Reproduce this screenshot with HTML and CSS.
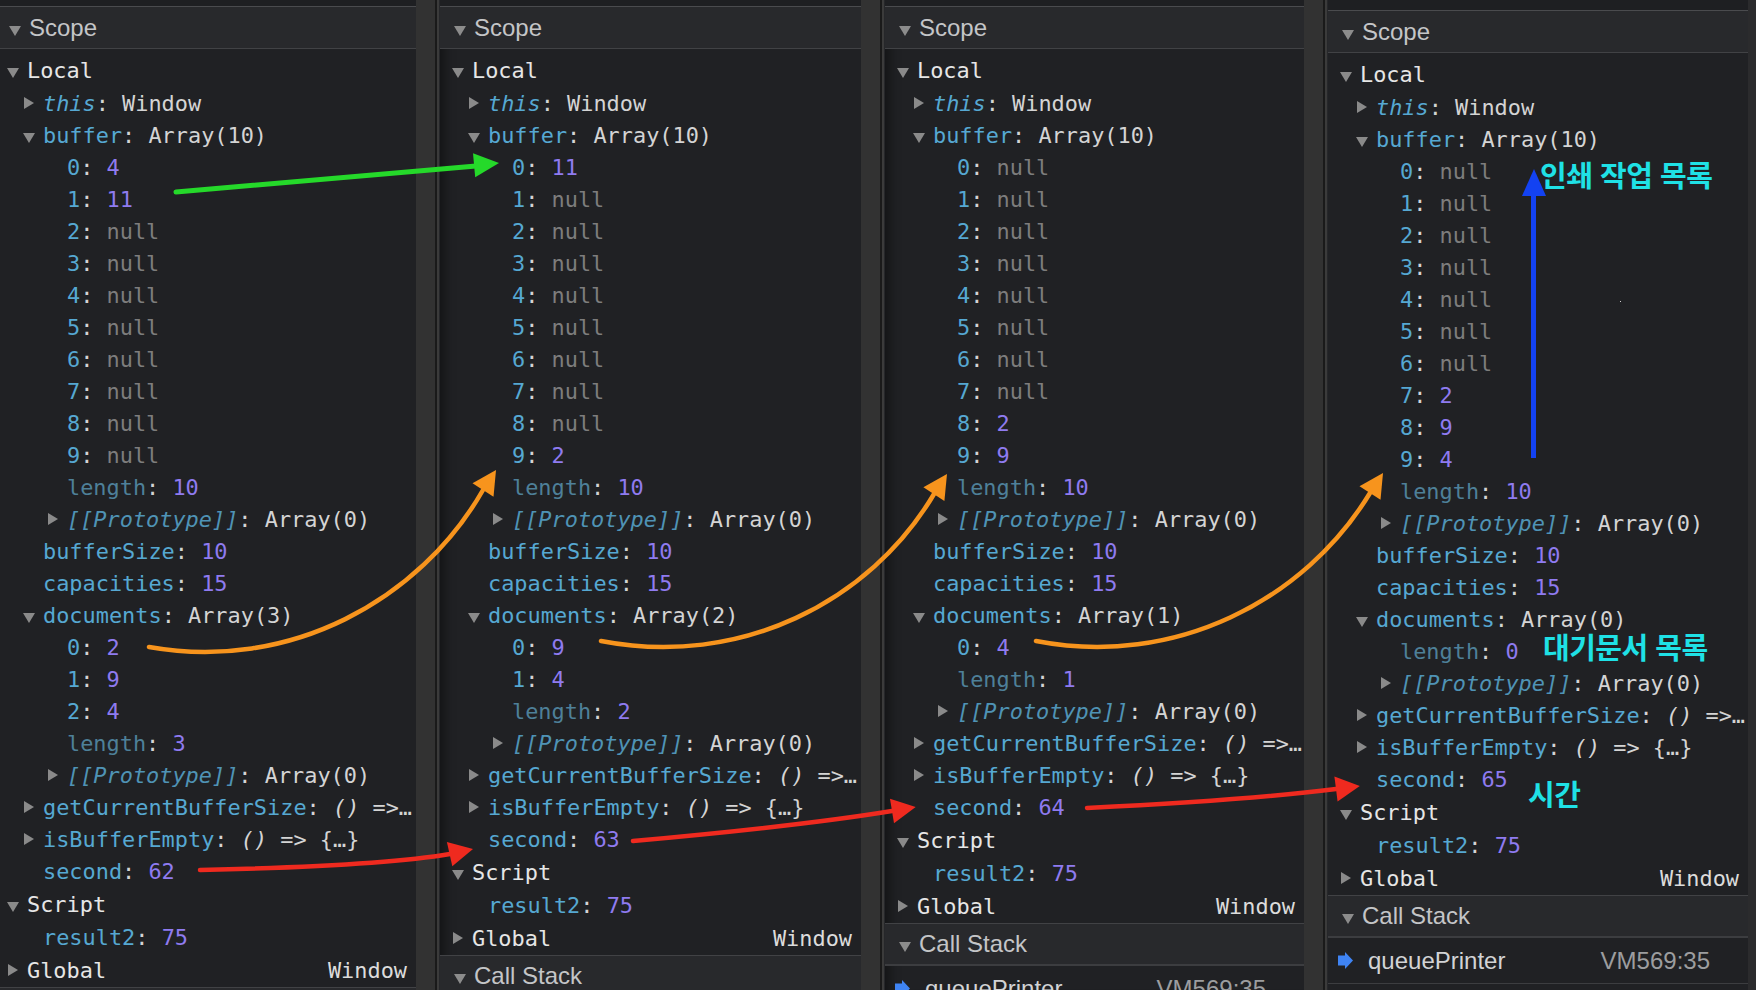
FILE: index.html
```html
<!DOCTYPE html>
<html lang="ko">
<head>
<meta charset="utf-8">
<title>Scope panels</title>
<link rel="stylesheet" href="styles.css">
</head>
<body>
<div class="screen">

  <section class="panel p1">
    <div class="inner">
      <div class="top"></div>
      <div class="hdr"><span class="htw"></span>Scope</div>
      <div class="tree">
        <div class="row sec"><span class="tw d"></span>Local</div>
        <div class="row l1"><span class="tw r"></span><span class="t"><span class="k it">this</span>: Window</span></div>
        <div class="row l1"><span class="tw d"></span><span class="t"><span class="k">buffer</span>: Array(10)</span></div>
        <div class="row l2"><span class="tw"></span><span class="t"><span class="k">0</span>: <span class="n">4</span></span></div>
        <div class="row l2"><span class="tw"></span><span class="t"><span class="k">1</span>: <span class="n">11</span></span></div>
        <div class="row l2"><span class="tw"></span><span class="t"><span class="k">2</span>: <span class="nl">null</span></span></div>
        <div class="row l2"><span class="tw"></span><span class="t"><span class="k">3</span>: <span class="nl">null</span></span></div>
        <div class="row l2"><span class="tw"></span><span class="t"><span class="k">4</span>: <span class="nl">null</span></span></div>
        <div class="row l2"><span class="tw"></span><span class="t"><span class="k">5</span>: <span class="nl">null</span></span></div>
        <div class="row l2"><span class="tw"></span><span class="t"><span class="k">6</span>: <span class="nl">null</span></span></div>
        <div class="row l2"><span class="tw"></span><span class="t"><span class="k">7</span>: <span class="nl">null</span></span></div>
        <div class="row l2"><span class="tw"></span><span class="t"><span class="k">8</span>: <span class="nl">null</span></span></div>
        <div class="row l2"><span class="tw"></span><span class="t"><span class="k">9</span>: <span class="nl">null</span></span></div>
        <div class="row l2"><span class="tw"></span><span class="t"><span class="kd">length</span>: <span class="n">10</span></span></div>
        <div class="row l2"><span class="tw r"></span><span class="t"><span class="kp">[[Prototype]]</span>: Array(0)</span></div>
        <div class="row l1"><span class="tw"></span><span class="t"><span class="k">bufferSize</span>: <span class="n">10</span></span></div>
        <div class="row l1"><span class="tw"></span><span class="t"><span class="k">capacities</span>: <span class="n">15</span></span></div>
        <div class="row l1"><span class="tw d"></span><span class="t"><span class="k">documents</span>: Array(3)</span></div>
        <div class="row l2"><span class="tw"></span><span class="t"><span class="k">0</span>: <span class="n">2</span></span></div>
        <div class="row l2"><span class="tw"></span><span class="t"><span class="k">1</span>: <span class="n">9</span></span></div>
        <div class="row l2"><span class="tw"></span><span class="t"><span class="k">2</span>: <span class="n">4</span></span></div>
        <div class="row l2"><span class="tw"></span><span class="t"><span class="kd">length</span>: <span class="n">3</span></span></div>
        <div class="row l2"><span class="tw r"></span><span class="t"><span class="kp">[[Prototype]]</span>: Array(0)</span></div>
        <div class="row l1"><span class="tw r"></span><span class="t cut"><span class="k">getCurrentBufferSize</span>: <span class="it">()</span> =&gt; {…}</span></div>
        <div class="row l1"><span class="tw r"></span><span class="t"><span class="k">isBufferEmpty</span>: <span class="it">()</span> =&gt; {…}</span></div>
        <div class="row l1"><span class="tw"></span><span class="t"><span class="k">second</span>: <span class="n">62</span></span></div>
        <div class="row sec"><span class="tw d"></span>Script</div>
        <div class="row l1"><span class="tw"></span><span class="t"><span class="k">result2</span>: <span class="n">75</span></span></div>
        <div class="row sec"><span class="tw r"></span>Global<span class="rv">Window</span></div>
      </div>
      <div class="hdr cs"><span class="htw"></span>Call Stack</div>
    </div>
  </section>

  <div class="gutter"></div>

  <section class="panel p2">
    <div class="inner">
      <div class="top"></div>
      <div class="hdr"><span class="htw"></span>Scope</div>
      <div class="tree">
        <div class="row sec"><span class="tw d"></span>Local</div>
        <div class="row l1"><span class="tw r"></span><span class="t"><span class="k it">this</span>: Window</span></div>
        <div class="row l1"><span class="tw d"></span><span class="t"><span class="k">buffer</span>: Array(10)</span></div>
        <div class="row l2"><span class="tw"></span><span class="t"><span class="k">0</span>: <span class="n">11</span></span></div>
        <div class="row l2"><span class="tw"></span><span class="t"><span class="k">1</span>: <span class="nl">null</span></span></div>
        <div class="row l2"><span class="tw"></span><span class="t"><span class="k">2</span>: <span class="nl">null</span></span></div>
        <div class="row l2"><span class="tw"></span><span class="t"><span class="k">3</span>: <span class="nl">null</span></span></div>
        <div class="row l2"><span class="tw"></span><span class="t"><span class="k">4</span>: <span class="nl">null</span></span></div>
        <div class="row l2"><span class="tw"></span><span class="t"><span class="k">5</span>: <span class="nl">null</span></span></div>
        <div class="row l2"><span class="tw"></span><span class="t"><span class="k">6</span>: <span class="nl">null</span></span></div>
        <div class="row l2"><span class="tw"></span><span class="t"><span class="k">7</span>: <span class="nl">null</span></span></div>
        <div class="row l2"><span class="tw"></span><span class="t"><span class="k">8</span>: <span class="nl">null</span></span></div>
        <div class="row l2"><span class="tw"></span><span class="t"><span class="k">9</span>: <span class="n">2</span></span></div>
        <div class="row l2"><span class="tw"></span><span class="t"><span class="kd">length</span>: <span class="n">10</span></span></div>
        <div class="row l2"><span class="tw r"></span><span class="t"><span class="kp">[[Prototype]]</span>: Array(0)</span></div>
        <div class="row l1"><span class="tw"></span><span class="t"><span class="k">bufferSize</span>: <span class="n">10</span></span></div>
        <div class="row l1"><span class="tw"></span><span class="t"><span class="k">capacities</span>: <span class="n">15</span></span></div>
        <div class="row l1"><span class="tw d"></span><span class="t"><span class="k">documents</span>: Array(2)</span></div>
        <div class="row l2"><span class="tw"></span><span class="t"><span class="k">0</span>: <span class="n">9</span></span></div>
        <div class="row l2"><span class="tw"></span><span class="t"><span class="k">1</span>: <span class="n">4</span></span></div>
        <div class="row l2"><span class="tw"></span><span class="t"><span class="kd">length</span>: <span class="n">2</span></span></div>
        <div class="row l2"><span class="tw r"></span><span class="t"><span class="kp">[[Prototype]]</span>: Array(0)</span></div>
        <div class="row l1"><span class="tw r"></span><span class="t cut"><span class="k">getCurrentBufferSize</span>: <span class="it">()</span> =&gt; {…}</span></div>
        <div class="row l1"><span class="tw r"></span><span class="t"><span class="k">isBufferEmpty</span>: <span class="it">()</span> =&gt; {…}</span></div>
        <div class="row l1"><span class="tw"></span><span class="t"><span class="k">second</span>: <span class="n">63</span></span></div>
        <div class="row sec"><span class="tw d"></span>Script</div>
        <div class="row l1"><span class="tw"></span><span class="t"><span class="k">result2</span>: <span class="n">75</span></span></div>
        <div class="row sec"><span class="tw r"></span>Global<span class="rv">Window</span></div>
      </div>
      <div class="hdr cs"><span class="htw"></span>Call Stack</div>
    </div>
  </section>

  <div class="gutter"></div>

  <section class="panel p3">
    <div class="inner">
      <div class="top"></div>
      <div class="hdr"><span class="htw"></span>Scope</div>
      <div class="tree">
        <div class="row sec"><span class="tw d"></span>Local</div>
        <div class="row l1"><span class="tw r"></span><span class="t"><span class="k it">this</span>: Window</span></div>
        <div class="row l1"><span class="tw d"></span><span class="t"><span class="k">buffer</span>: Array(10)</span></div>
        <div class="row l2"><span class="tw"></span><span class="t"><span class="k">0</span>: <span class="nl">null</span></span></div>
        <div class="row l2"><span class="tw"></span><span class="t"><span class="k">1</span>: <span class="nl">null</span></span></div>
        <div class="row l2"><span class="tw"></span><span class="t"><span class="k">2</span>: <span class="nl">null</span></span></div>
        <div class="row l2"><span class="tw"></span><span class="t"><span class="k">3</span>: <span class="nl">null</span></span></div>
        <div class="row l2"><span class="tw"></span><span class="t"><span class="k">4</span>: <span class="nl">null</span></span></div>
        <div class="row l2"><span class="tw"></span><span class="t"><span class="k">5</span>: <span class="nl">null</span></span></div>
        <div class="row l2"><span class="tw"></span><span class="t"><span class="k">6</span>: <span class="nl">null</span></span></div>
        <div class="row l2"><span class="tw"></span><span class="t"><span class="k">7</span>: <span class="nl">null</span></span></div>
        <div class="row l2"><span class="tw"></span><span class="t"><span class="k">8</span>: <span class="n">2</span></span></div>
        <div class="row l2"><span class="tw"></span><span class="t"><span class="k">9</span>: <span class="n">9</span></span></div>
        <div class="row l2"><span class="tw"></span><span class="t"><span class="kd">length</span>: <span class="n">10</span></span></div>
        <div class="row l2"><span class="tw r"></span><span class="t"><span class="kp">[[Prototype]]</span>: Array(0)</span></div>
        <div class="row l1"><span class="tw"></span><span class="t"><span class="k">bufferSize</span>: <span class="n">10</span></span></div>
        <div class="row l1"><span class="tw"></span><span class="t"><span class="k">capacities</span>: <span class="n">15</span></span></div>
        <div class="row l1"><span class="tw d"></span><span class="t"><span class="k">documents</span>: Array(1)</span></div>
        <div class="row l2"><span class="tw"></span><span class="t"><span class="k">0</span>: <span class="n">4</span></span></div>
        <div class="row l2"><span class="tw"></span><span class="t"><span class="kd">length</span>: <span class="n">1</span></span></div>
        <div class="row l2"><span class="tw r"></span><span class="t"><span class="kp">[[Prototype]]</span>: Array(0)</span></div>
        <div class="row l1"><span class="tw r"></span><span class="t cut"><span class="k">getCurrentBufferSize</span>: <span class="it">()</span> =&gt; {…}</span></div>
        <div class="row l1"><span class="tw r"></span><span class="t"><span class="k">isBufferEmpty</span>: <span class="it">()</span> =&gt; {…}</span></div>
        <div class="row l1"><span class="tw"></span><span class="t"><span class="k">second</span>: <span class="n">64</span></span></div>
        <div class="row sec"><span class="tw d"></span>Script</div>
        <div class="row l1"><span class="tw"></span><span class="t"><span class="k">result2</span>: <span class="n">75</span></span></div>
        <div class="row sec"><span class="tw r"></span>Global<span class="rv">Window</span></div>
      </div>
      <div class="hdr cs"><span class="htw"></span>Call Stack</div>
      <div class="frame">
        <svg class="cur" viewBox="0 0 15 17" width="15" height="17"><path d="M0 3.5 H7 V0 L15 8.5 L7 17 V13.5 H0 Z" fill="#3f84f4"/></svg>
        <span class="fn">queuePrinter</span><span class="loc">VM569:35</span>
      </div>
    </div>
  </section>

  <div class="gutter"></div>

  <section class="panel p4">
    <div class="inner">
      <div class="top"></div>
      <div class="hdr"><span class="htw"></span>Scope</div>
      <div class="tree">
        <div class="row sec"><span class="tw d"></span>Local</div>
        <div class="row l1"><span class="tw r"></span><span class="t"><span class="k it">this</span>: Window</span></div>
        <div class="row l1"><span class="tw d"></span><span class="t"><span class="k">buffer</span>: Array(10)</span></div>
        <div class="row l2"><span class="tw"></span><span class="t"><span class="k">0</span>: <span class="nl">null</span></span></div>
        <div class="row l2"><span class="tw"></span><span class="t"><span class="k">1</span>: <span class="nl">null</span></span></div>
        <div class="row l2"><span class="tw"></span><span class="t"><span class="k">2</span>: <span class="nl">null</span></span></div>
        <div class="row l2"><span class="tw"></span><span class="t"><span class="k">3</span>: <span class="nl">null</span></span></div>
        <div class="row l2"><span class="tw"></span><span class="t"><span class="k">4</span>: <span class="nl">null</span></span></div>
        <div class="row l2"><span class="tw"></span><span class="t"><span class="k">5</span>: <span class="nl">null</span></span></div>
        <div class="row l2"><span class="tw"></span><span class="t"><span class="k">6</span>: <span class="nl">null</span></span></div>
        <div class="row l2"><span class="tw"></span><span class="t"><span class="k">7</span>: <span class="n">2</span></span></div>
        <div class="row l2"><span class="tw"></span><span class="t"><span class="k">8</span>: <span class="n">9</span></span></div>
        <div class="row l2"><span class="tw"></span><span class="t"><span class="k">9</span>: <span class="n">4</span></span></div>
        <div class="row l2"><span class="tw"></span><span class="t"><span class="kd">length</span>: <span class="n">10</span></span></div>
        <div class="row l2"><span class="tw r"></span><span class="t"><span class="kp">[[Prototype]]</span>: Array(0)</span></div>
        <div class="row l1"><span class="tw"></span><span class="t"><span class="k">bufferSize</span>: <span class="n">10</span></span></div>
        <div class="row l1"><span class="tw"></span><span class="t"><span class="k">capacities</span>: <span class="n">15</span></span></div>
        <div class="row l1"><span class="tw d"></span><span class="t"><span class="k">documents</span>: Array(0)</span></div>
        <div class="row l2"><span class="tw"></span><span class="t"><span class="kd">length</span>: <span class="n">0</span></span></div>
        <div class="row l2"><span class="tw r"></span><span class="t"><span class="kp">[[Prototype]]</span>: Array(0)</span></div>
        <div class="row l1"><span class="tw r"></span><span class="t cut"><span class="k">getCurrentBufferSize</span>: <span class="it">()</span> =&gt; {…}</span></div>
        <div class="row l1"><span class="tw r"></span><span class="t"><span class="k">isBufferEmpty</span>: <span class="it">()</span> =&gt; {…}</span></div>
        <div class="row l1"><span class="tw"></span><span class="t"><span class="k">second</span>: <span class="n">65</span></span></div>
        <div class="row sec"><span class="tw d"></span>Script</div>
        <div class="row l1"><span class="tw"></span><span class="t"><span class="k">result2</span>: <span class="n">75</span></span></div>
        <div class="row sec"><span class="tw r"></span>Global<span class="rv">Window</span></div>
      </div>
      <div class="hdr cs"><span class="htw"></span>Call Stack</div>
      <div class="frame">
        <svg class="cur" viewBox="0 0 15 17" width="15" height="17"><path d="M0 3.5 H7 V0 L15 8.5 L7 17 V13.5 H0 Z" fill="#3f84f4"/></svg>
        <span class="fn">queuePrinter</span><span class="loc">VM569:35</span>
      </div>
    </div>
  </section>

  <div class="edge"></div>

  <svg class="annot" width="1756" height="990" viewBox="0 0 1756 990">
    <line x1="176" y1="192" x2="476" y2="166" stroke="#25d92a" stroke-width="5" stroke-linecap="round"/>
    <polygon points="499,163 475.2,177.2 473,153.2" fill="#25d92a"/>

    <path d="M149,647 C290,672 420,600 483,490" fill="none" stroke="#f7941d" stroke-width="4.5" stroke-linecap="round"/>
    <polygon points="496,470 493.5,496.8 472.5,483.2" fill="#f7941d"/>
    <path d="M601,641 C740,668 870,602 934,494" fill="none" stroke="#f7941d" stroke-width="4.5" stroke-linecap="round"/>
    <polygon points="947,474 944.4,500.9 923.4,487.3" fill="#f7941d"/>
    <path d="M1036,641 C1175,668 1305,600 1370,493" fill="none" stroke="#f7941d" stroke-width="4.5" stroke-linecap="round"/>
    <polygon points="1383,473 1380.5,499.8 1359.5,486.2" fill="#f7941d"/>

    <path d="M200,870 Q380,866 450,854" fill="none" stroke="#ef2a1f" stroke-width="4.5" stroke-linecap="round"/>
    <polygon points="473,849 452.3,866.3 446.9,841.9" fill="#ef2a1f"/>
    <path d="M633,841 Q800,826 892,811" fill="none" stroke="#ef2a1f" stroke-width="4.5" stroke-linecap="round"/>
    <polygon points="915.7,807.1 894,823.3 890,798.7" fill="#ef2a1f"/>
    <path d="M1087,808 Q1250,800 1336,789" fill="none" stroke="#ef2a1f" stroke-width="4.5" stroke-linecap="round"/>
    <polygon points="1359.8,786 1337.6,801.4 1334.4,776.6" fill="#ef2a1f"/>

    <line x1="1533.5" y1="458" x2="1533.5" y2="192" stroke="#1342f2" stroke-width="5"/>
    <polygon points="1534,169 1546,196 1522,196" fill="#1342f2"/>

    <rect x="1620" y="301" width="1" height="1" fill="#d0d0d0"/>
  </svg>

  <span class="label lb1">인쇄 작업 목록</span>
  <span class="label lb2">대기문서 목록</span>
  <span class="label lb3">시간</span>
</div>
</body>
</html>
```

FILE: styles.css
```css
* { box-sizing: border-box; }

html, body {
  margin: 0;
  padding: 0;
  background: #1c1c1e;
}

.screen {
  position: relative;
  width: 1756px;
  height: 990px;
  display: flex;
  overflow: hidden;
}

.panel {
  flex: none;
  height: 990px;
  background: #202124;
  overflow: hidden;
}

.p1 { width: 416px; }
.p2 { width: 421px; }
.p3 { width: 419px; }
.p4 { width: 420px; }

.p2, .p3 {
  box-shadow: inset 16px 0 12px -12px rgba(0, 0, 0, 0.45);
}

.inner {
  width: 100%;
  display: flex;
  flex-direction: column;
}

.p1 .inner {
  width: 421px;
  margin-left: -5px;
}

.gutter {
  flex: none;
  width: 24px;
  height: 990px;
  background: linear-gradient(to right,
    #323232 0, #323232 19px,
    #1a1a1a 19px, #1a1a1a 21px,
    #3b3b3b 21px, #3b3b3b 23px,
    #26272a 23px);
}

.edge {
  flex: none;
  width: 8px;
  height: 990px;
  background: #2b2b2d;
}

.top {
  height: 6px;
  flex: none;
  background: #1e1f22;
  border-bottom: 1px solid #4a4b4e;
  box-sizing: content-box;
}

.p4 .top { height: 10px; }

.hdr {
  flex: none;
  height: 42px;
  display: flex;
  align-items: center;
  padding-left: 14px;
  background: #28292c;
  border-bottom: 1px solid #414245;
  font-family: "Liberation Sans", Arial, sans-serif;
  font-size: 24px;
  color: #c4c5c7;
  white-space: nowrap;
}

.htw {
  width: 0;
  height: 0;
  margin-right: 8px;
  border-top: 10px solid #8c8c8c;
  border-left: 6.5px solid transparent;
  border-right: 6.5px solid transparent;
  transform: translateY(3px);
}

.hdr.cs {
  height: 43px;
  border-top: 1px solid #414245;
  border-bottom: 2px solid #3c3d40;
}

.tree {
  padding-top: 4px;
}

.row {
  height: 32px;
  display: flex;
  align-items: center;
  white-space: nowrap;
  font-family: "DejaVu Sans Mono", "Liberation Mono", monospace;
  font-size: 21.9px;
  color: #d4d4d4;
  padding-right: 0;
}

.t {
  white-space: pre;
}

.row.sec {
  height: 34px;
  padding-left: 12px;
  color: #e6e6e6;
}

.row.l1 { padding-left: 28px; }
.row.l2 { padding-left: 52px; }

.tw {
  flex: none;
  width: 20px;
  height: 100%;
  display: flex;
  align-items: center;
}

.tw.r::before {
  content: "";
  width: 0;
  height: 0;
  margin-left: 1px;
  border-left: 10px solid #8a8a8a;
  border-top: 6.5px solid transparent;
  border-bottom: 6.5px solid transparent;
}

.tw.d::before {
  content: "";
  width: 0;
  height: 0;
  border-top: 10px solid #8a8a8a;
  border-left: 6.5px solid transparent;
  border-right: 6.5px solid transparent;
  transform: translateY(3px);
}

.k { color: #56a8d2; }
.it { font-style: italic; }
.kd { color: #4e8099; }
.kp { color: #4f93b5; font-style: italic; }
.n { color: #8f7bf0; }
.nl { color: #7d7d7d; }

.cut {
  min-width: 0;
  overflow: hidden;
  text-overflow: ellipsis;
}

.rv {
  margin-left: auto;
  padding-right: 9px;
  color: #dcdcdc;
}

.frame {
  flex: none;
  height: 46px;
  display: flex;
  align-items: center;
  padding-left: 10px;
  padding-right: 38px;
  border-bottom: 1px solid #3c3d40;
  font-family: "Liberation Sans", Arial, sans-serif;
  font-size: 24px;
  white-space: nowrap;
}

.cur {
  flex: none;
  margin-right: 15px;
}

.fn { color: #d2d3d5; }
.loc { margin-left: auto; color: #9c9d9f; }

.annot {
  position: absolute;
  left: 0;
  top: 0;
  pointer-events: none;
}

.label {
  position: absolute;
  font-family: "Noto Sans CJK KR", "Noto Sans", sans-serif;
  font-weight: 700;
  font-size: 29px;
  line-height: 1;
  letter-spacing: -0.5px;
  color: #1fe1e6;
  white-space: nowrap;
}

.lb1 { left: 1540px; top: 160px; }
.lb2 { left: 1543px; top: 632px; }
.lb3 { left: 1528px; top: 779px; }
```
